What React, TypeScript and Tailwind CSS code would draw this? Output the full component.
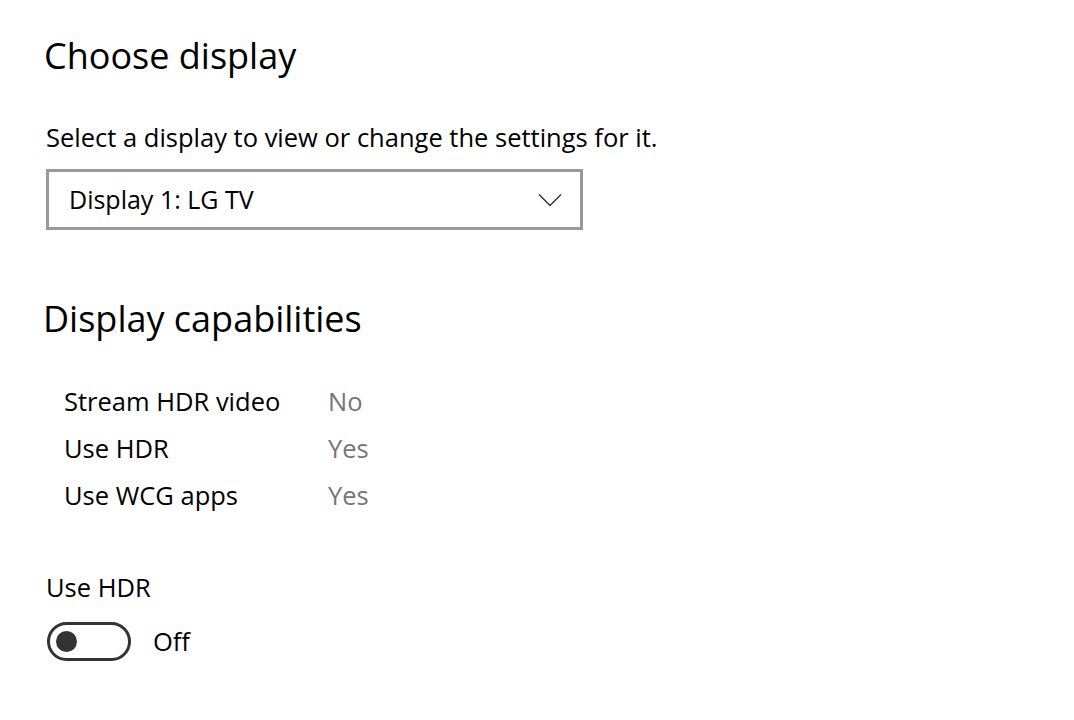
export default function App() {
  const caps = [
    { label: "Stream HDR video", value: "No" },
    { label: "Use HDR", value: "Yes" },
    { label: "Use WCG apps", value: "Yes" },
  ];

  return (
    <div
      className="w-[1074px] h-[720px] bg-white text-black overflow-hidden"
      style={{ fontFamily: '"Open Sans", "Noto Sans", sans-serif' }}
    >
      <div className="flex flex-col pl-[44px] pt-[30px]">
        {/* Choose display */}
        <h1 className="text-[36px] leading-[52px] font-normal">Choose display</h1>

        <p className="mt-[39px] ml-[2px] text-[25.5px] leading-[32px]">
          Select a display to view or change the settings for it.
        </p>

        <div className="mt-[16px] ml-[2px] w-[537px] h-[61px] border-[3px] border-[#999999] flex items-center justify-between pl-[20px] pr-[18px]">
          <span className="text-[25px]">Display 1: LG TV</span>
          <svg width="24" height="14" viewBox="0 0 24 14" fill="none" stroke="#333" strokeWidth="1.5">
            <polyline points="1,1.5 12,12.5 23,1.5" />
          </svg>
        </div>

        {/* Display capabilities */}
        <h2 className="mt-[63px] -ml-[1px] text-[36px] leading-[52px] font-normal">Display capabilities</h2>

        <div className="mt-[40px] ml-[20px] flex flex-col gap-[15px]">
          {caps.map((c) => (
            <div key={c.label} className="flex items-center text-[25.5px] leading-[32px]">
              <span className="w-[264px]">{c.label}</span>
              <span className="text-[#767676]">{c.value}</span>
            </div>
          ))}
        </div>

        {/* HDR toggle */}
        <p className="mt-[60px] ml-[2px] text-[25.5px] leading-[32px]">Use HDR</p>
        <div className="mt-[19px] ml-[3px] flex items-center gap-[22px]">
          <div className="w-[84px] h-[39px] rounded-full border-[3px] border-[#333333] flex items-center pl-[6px]">
            <div className="w-[21px] h-[21px] rounded-full bg-[#333333]" />
          </div>
          <span className="text-[25.5px]">Off</span>
        </div>
      </div>
    </div>
  );
}
